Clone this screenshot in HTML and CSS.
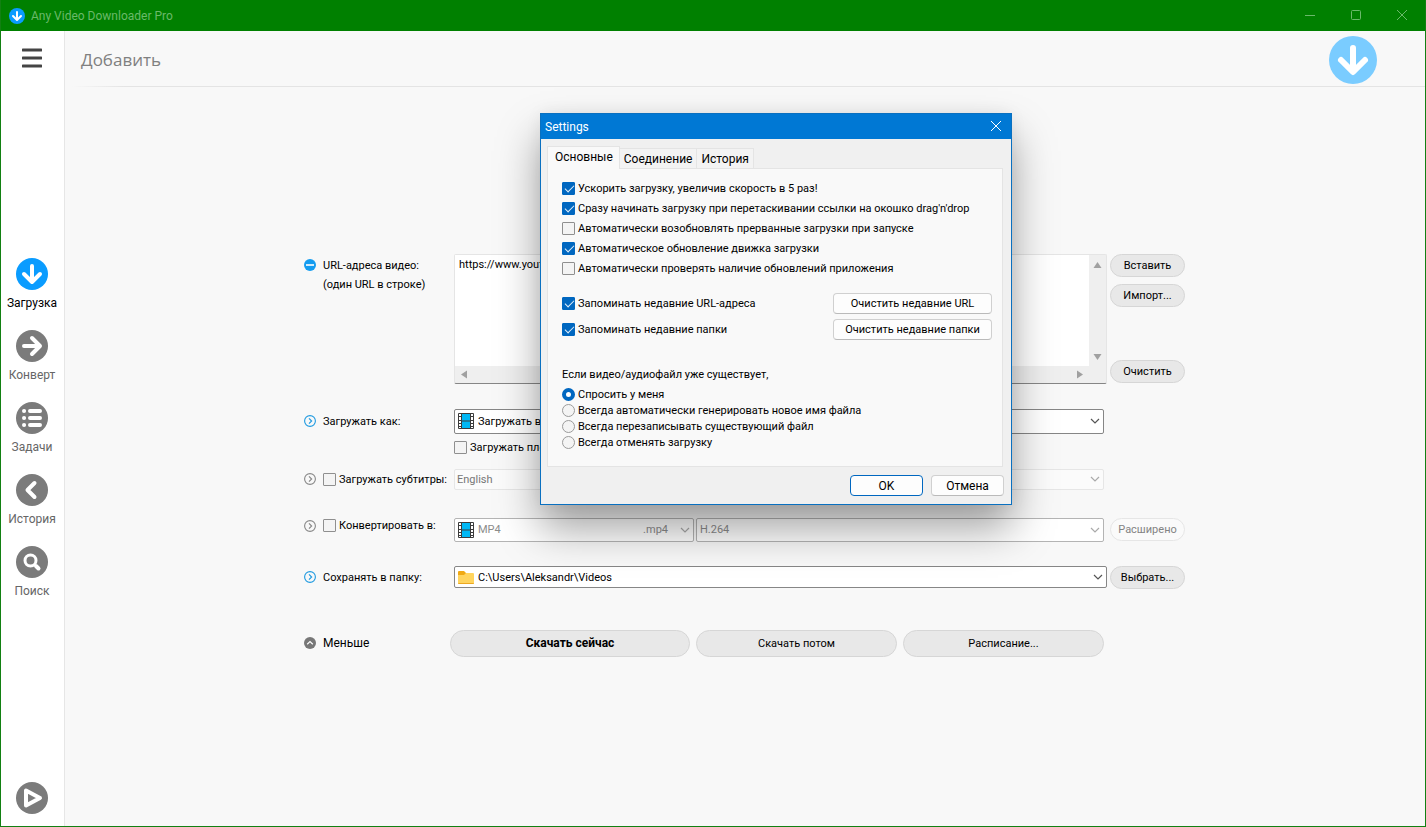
FILE: index.html
```
<!DOCTYPE html>
<html lang="ru">
<head>
    <meta charset="UTF-8">
    <meta name="viewport" content="width=device-width, initial-scale=1.0">
    <title>Any Video Downloader Pro</title>
    <link rel="stylesheet" href="styles.css">
</head>
<body>
    <!-- shared icons -->
    <svg class="sprite" aria-hidden="true">
        <symbol id="arrow-down" viewBox="0 0 32 32">
            <circle cx="16" cy="16" r="16" fill="currentColor"/>
            <path d="M16 8v15M8 16l8 8 8-8" fill="none" stroke="#fff" stroke-width="4" stroke-linecap="round" stroke-linejoin="round"/>
        </symbol>
        <symbol id="chevron" viewBox="0 0 10 6">
            <path d="M1 1l4 4 4-4" fill="none" stroke="currentColor" stroke-width="1.2"/>
        </symbol>
        <symbol id="film" viewBox="0 0 16 16">
            <rect width="16" height="16" rx="1" fill="#3c3c3c"/>
            <path d="M4 1h8v6.500H4zM4 8.500h8V15H4z" fill="#00b7f4"/>
            <path d="M1 1h2v2H1zM1 4h2v3H1zM1 8h2v2H1zM1 11h2v2H1zM1 14h2v1H1zM13 1h2v2h-2zM13 4h2v3h-2zM13 8h2v2h-2zM13 11h2v2h-2zM13 14h2v1h-2z" fill="#fff"/>
        </symbol>
        <symbol id="expand" viewBox="0 0 12 12">
            <circle cx="6" cy="6" r="5.4" fill="none" stroke="currentColor" stroke-width="1.1"/>
            <path d="M5 3.400L7.600 6 5 8.600" fill="none" stroke="currentColor" stroke-width="1.2"/>
        </symbol>
    </svg>

    <div class="app">
        <header class="titlebar">
            <svg class="app-icon"><use href="#arrow-down"/></svg>
            <span class="app-name">Any Video Downloader Pro</span>
            <button class="win-btn" aria-label="Minimize"><svg viewBox="0 0 10 10"><path d="M0 5.5h10"/></svg></button>
            <button class="win-btn" aria-label="Maximize"><svg viewBox="0 0 10 10"><rect x="0.5" y="0.5" width="9" height="9" rx="1"/></svg></button>
            <button class="win-btn" aria-label="Close"><svg viewBox="0 0 10 10"><path d="M0 0l10 10M10 0L0 10"/></svg></button>
        </header>

        <div class="body">
            <aside class="sidebar">
                <button class="menu-btn" aria-label="Меню">
                    <svg viewBox="0 0 20 20"><path d="M1 2h18M1 10h18M1 18h18" stroke="#444" stroke-width="3" stroke-linecap="round"/></svg>
                </button>
                <nav class="nav">
                    <a class="nav-item active" href="#">
                        <svg><use href="#arrow-down"/></svg>
                        <span>Загрузка</span>
                    </a>
                    <a class="nav-item" href="#">
                        <svg viewBox="0 0 32 32"><circle cx="16" cy="16" r="16"/><path class="stroke" d="M8 16h15M16 8l8 8-8 8"/></svg>
                        <span>Конверт</span>
                    </a>
                    <a class="nav-item" href="#">
                        <svg viewBox="0 0 32 32"><circle cx="16" cy="16" r="16"/><path class="stroke" d="M8 9h.1M14 9h10M8 16h.1M14 16h10M8 23h.1M14 23h10"/></svg>
                        <span>Задачи</span>
                    </a>
                    <a class="nav-item" href="#">
                        <svg viewBox="0 0 32 32"><circle cx="16" cy="16" r="16"/><path class="stroke" d="M18.500 9l-7 7 7 7"/></svg>
                        <span>История</span>
                    </a>
                    <a class="nav-item" href="#">
                        <svg viewBox="0 0 32 32"><circle cx="16" cy="16" r="16"/><circle class="stroke lens" cx="14.5" cy="14.5" r="5.5"/><path class="stroke" d="M20 20l2.500 2.500"/></svg>
                        <span>Поиск</span>
                    </a>
                </nav>
                <button class="play-btn" aria-label="Воспроизвести">
                    <svg viewBox="0 0 32 32"><circle cx="16" cy="16" r="16"/><path class="stroke" d="M10 8.500v15l14-7.500z"/></svg>
                </button>
            </aside>

            <main class="main">
                <div class="page-head">
                    <h1>Добавить</h1>
                    <svg class="big-icon"><use href="#arrow-down"/></svg>
                </div>

                <form class="form">
                    <div class="row row-url">
                        <svg class="toggle" viewBox="0 0 12 12"><circle cx="6" cy="6" r="6" fill="#149cf0"/><path d="M2 6h8" stroke="#fff" stroke-width="1.6"/></svg>
                        <label class="label" for="urls">URL-адреса видео:<br>(один URL в строке)</label>
                        <div class="url-box">
                            <textarea id="urls" wrap="off">https://www.youtube.com/</textarea>
                            <div class="vbar">
                                <svg viewBox="0 0 8 6"><path d="M4 0l4 6H0z"/></svg>
                                <svg viewBox="0 0 8 6"><path d="M0 0h8L4 6z"/></svg>
                            </div>
                            <div class="hbar">
                                <svg viewBox="0 0 6 8"><path d="M6 0v8L0 4z"/></svg>
                                <svg viewBox="0 0 6 8"><path d="M0 0l6 4-6 4z"/></svg>
                            </div>
                        </div>
                        <div class="side-buttons">
                            <button type="button" class="pill">Вставить</button>
                            <button type="button" class="pill">Импорт...</button>
                            <button type="button" class="pill last">Очистить</button>
                        </div>
                    </div>

                    <div class="row row-as">
                        <svg class="toggle blue"><use href="#expand"/></svg>
                        <label class="label" for="as">Загружать как:</label>
                        <div class="fields">
                            <div class="combo">
                                <svg class="film"><use href="#film"/></svg>
                                <select id="as"><option>Загружать видео</option></select>
                                <svg class="chevron"><use href="#chevron"/></svg>
                            </div>
                        </div>
                    </div>

                    <div class="row row-list">
                        <label class="check"><input type="checkbox">Загружать плейлист</label>
                    </div>

                    <div class="row row-sub">
                        <svg class="toggle"><use href="#expand"/></svg>
                        <label class="label check"><input type="checkbox">Загружать субтитры:</label>
                        <div class="fields">
                            <div class="combo flat">
                                <select aria-label="Субтитры" disabled><option>English</option></select>
                                <svg class="chevron"><use href="#chevron"/></svg>
                            </div>
                        </div>
                    </div>

                    <div class="row row-conv">
                        <svg class="toggle"><use href="#expand"/></svg>
                        <label class="label check"><input type="checkbox">Конвертировать в:</label>
                        <div class="fields">
                            <div class="combo off format">
                                <svg class="film"><use href="#film"/></svg>
                                <select aria-label="Формат" disabled><option>MP4</option></select>
                                <span class="ext">.mp4</span>
                                <svg class="chevron"><use href="#chevron"/></svg>
                            </div>
                            <div class="combo off">
                                <select aria-label="Кодек" disabled><option>H.264</option></select>
                                <svg class="chevron"><use href="#chevron"/></svg>
                            </div>
                        </div>
                        <button type="button" class="pill" disabled>Расширено</button>
                    </div>

                    <div class="row row-save">
                        <svg class="toggle blue"><use href="#expand"/></svg>
                        <label class="label" for="folder">Сохранять в папку:</label>
                        <div class="fields wide">
                            <div class="combo">
                                <svg class="folder" viewBox="0 0 16 13"><path d="M0 1q0-1 1-1h5l2 2v3H0z" fill="#f0a914"/><path d="M0 4h6l2-2h7q1 0 1 1v9q0 1-1 1H1q-1 0-1-1z" fill="#ffd45e"/><path d="M0 12h16q0 1-1 1H1q-1 0-1-1z" fill="#eda820"/></svg>
                                <select id="folder"><option>C:\Users\Aleksandr\Videos</option></select>
                                <svg class="chevron"><use href="#chevron"/></svg>
                            </div>
                        </div>
                        <button type="button" class="pill">Выбрать...</button>
                    </div>

                    <div class="row row-actions">
                        <svg class="toggle" viewBox="0 0 12 12"><circle cx="6" cy="6" r="6" fill="#777"/><path d="M3.200 7.200L6 4.600l2.800 2.600" fill="none" stroke="#fff" stroke-width="1.2"/></svg>
                        <span class="label less">Меньше</span>
                        <div class="actions">
                            <button type="submit" class="pill primary">Скачать сейчас</button>
                            <button type="button" class="pill">Скачать потом</button>
                            <button type="button" class="pill">Расписание...</button>
                        </div>
                    </div>
                </form>
            </main>
        </div>
    </div>

    <div class="dialog" role="dialog" aria-labelledby="dialog-title">
        <div class="dialog-head">
            <span id="dialog-title">Settings</span>
            <button class="dialog-close" aria-label="Close"><svg viewBox="0 0 10 10"><path d="M0 0l10 10M10 0L0 10" stroke="#fff"/></svg></button>
        </div>
        <div class="dialog-body">
            <div class="tabs" role="tablist">
                <button class="tab selected" role="tab">Основные</button>
                <button class="tab" role="tab">Соединение</button>
                <button class="tab" role="tab">История</button>
            </div>
            <div class="panel">
                <div class="options">
                    <label class="check"><input type="checkbox" checked>Ускорить загрузку, увеличив скорость в 5 раз!</label>
                    <label class="check"><input type="checkbox" checked>Сразу начинать загрузку при перетаскивании ссылки на окошко drag'n'drop</label>
                    <label class="check"><input type="checkbox">Автоматически возобновлять прерванные загрузки при запуске</label>
                    <label class="check"><input type="checkbox" checked>Автоматическое обновление движка загрузки</label>
                    <label class="check"><input type="checkbox">Автоматически проверять наличие обновлений приложения</label>
                </div>
                <div class="recent">
                    <label class="check"><input type="checkbox" checked>Запоминать недавние URL-адреса</label>
                    <button class="btn">Очистить недавние URL</button>
                    <label class="check"><input type="checkbox" checked>Запоминать недавние папки</label>
                    <button class="btn">Очистить недавние папки</button>
                </div>
                <p class="question">Если видео/аудиофайл уже существует,</p>
                <div class="radios">
                    <label class="check"><input type="radio" name="exists" checked>Спросить у меня</label>
                    <label class="check"><input type="radio" name="exists">Всегда автоматически генерировать новое имя файла</label>
                    <label class="check"><input type="radio" name="exists">Всегда перезаписывать существующий файл</label>
                    <label class="check"><input type="radio" name="exists">Всегда отменять загрузку</label>
                </div>
            </div>
            <div class="dialog-foot">
                <button class="btn ok">OK</button>
                <button class="btn">Отмена</button>
            </div>
        </div>
    </div>
</body>
</html>
```
FILE: styles.css
```
* {
    box-sizing: border-box;
}

body {
    margin: 0;
    font-family: Roboto, "Noto Sans", sans-serif;
    font-size: 11px;
    color: #000;
    background: #f8f8f8;
}

button, select, textarea, input {
    font: inherit;
    color: inherit;
    margin: 0;
    padding: 0;
}

button {
    border: none;
    background: none;
}

.sprite {
    display: none;
}

.app {
    min-height: 100vh;
    display: flex;
    flex-direction: column;
    border: 1px solid #128012;
    border-top: none;
}

/* window title */
.titlebar {
    height: 31px;
    display: flex;
    align-items: center;
    background: #008000;
    color: #6ab96a;
    font-size: 12px;
    padding-left: 8px;
}

.app-icon {
    width: 16px;
    height: 16px;
    color: #0a9cff;
    margin-right: 6px;
}

.app-name {
    flex: 1;
}

.win-btn {
    width: 46px;
    height: 30px;
}

.win-btn svg {
    width: 10px;
    height: 10px;
    fill: none;
    stroke: #6ab96a;
}

.body {
    flex: 1;
    display: flex;
}

/* sidebar */
.sidebar {
    width: 64px;
    display: flex;
    flex-direction: column;
    justify-content: space-between;
    align-items: center;
    background: #fff;
    border-right: 1px solid #e6e6e6;
    padding: 17px 1px 12px 0;
}

.menu-btn svg {
    display: block;
    width: 20px;
    height: 20px;
}

.nav {
    display: flex;
    flex-direction: column;
    gap: 20px;
    margin-top: 6px;
}

.nav-item {
    display: flex;
    flex-direction: column;
    align-items: center;
    gap: 5px;
    height: 52px;
    font-size: 12px;
    line-height: 16px;
    color: #666;
    text-decoration: none;
    white-space: nowrap;
}

.nav-item.active {
    color: #000;
}

.nav-item svg, .play-btn svg {
    display: block;
    flex: none;
    width: 32px;
    height: 32px;
    fill: #7b7b7b;
}

.nav-item.active svg {
    color: #0a9cff;
}

.sidebar .stroke {
    fill: none;
    stroke: #fff;
    stroke-width: 4;
    stroke-linecap: round;
    stroke-linejoin: round;
}

.sidebar .lens {
    stroke-width: 3;
}

/* main area */
.main {
    flex: 1;
    display: flex;
    flex-direction: column;
    background: #f8f8f8;
}

.page-head {
    height: 56px;
    display: flex;
    align-items: center;
    justify-content: space-between;
    padding: 2px 48px 0 16px;
    border-bottom: 1px solid;
    border-image: linear-gradient(to right, transparent 8px, #e4e4e4 60px) 1;
}

.page-head h1 {
    margin: 0;
    font-family: "Open Sans", sans-serif;
    font-size: 17px;
    font-weight: 400;
    color: #808080;
}

.big-icon {
    width: 48px;
    height: 48px;
    color: #7accff;
}

.form {
    flex: 1;
    width: 100%;
    max-width: 882px;
    margin: 0 auto;
    display: flex;
    flex-direction: column;
    justify-content: center;
    padding: 0 1px 3px 0;
}

.row {
    display: flex;
    align-items: center;
}

.toggle {
    flex: none;
    width: 12px;
    height: 12px;
    margin-right: 7px;
    color: #888;
}

.toggle.blue {
    color: #1f9ae0;
}

.label {
    flex: none;
    width: 131px;
    white-space: nowrap;
}

.check {
    display: flex;
    align-items: center;
    gap: 3px;
    white-space: nowrap;
    line-height: 13px;
}

.row-url {
    align-items: stretch;
    margin-bottom: 25px;
}

.row-url .toggle {
    margin-top: 5px;
}

.row-url .label {
    line-height: 19px;
    padding-top: 2px;
}

.row-as {
    margin-bottom: 7px;
}

.row-list {
    padding-left: 150px;
    margin-bottom: 15px;
}

.row-sub {
    margin-bottom: 28px;
}

.row-conv {
    margin-bottom: 24px;
}

/* the caption lines up with the upper part of its fields */
.row-conv .toggle, .row-conv .label {
    margin-bottom: 8px;
}

.row-save {
    margin-bottom: 41px;
}

/* url list */
.url-box {
    flex: 1;
    height: 130px;
    display: grid;
    grid-template-columns: 1fr 17px;
    grid-template-rows: 1fr 17px;
    background: #efefef;
    border: 1px solid #e5e5e5;
    border-bottom-color: #868686;
    border-radius: 2px;
}

.url-box textarea {
    border: none;
    outline: none;
    resize: none;
    overflow: hidden;
    background: #fff;
    padding: 3px 4px;
}

.url-box svg {
    fill: #a0a0a0;
}

.vbar {
    display: flex;
    flex-direction: column;
    justify-content: space-between;
    align-items: center;
    padding: 7px 0 6px;
}

.vbar svg {
    width: 9px;
    height: 6px;
}

.hbar {
    display: flex;
    justify-content: space-between;
    align-items: center;
    padding: 0 6px;
}

.hbar svg {
    width: 6px;
    height: 9px;
}

.side-buttons {
    display: flex;
    flex-direction: column;
    gap: 7px;
    padding-bottom: 1px;
}

.pill {
    flex: none;
    width: 75px;
    height: 23px;
    margin-left: 3px;
    background: #e8e8e8;
    border: 1px solid #d6d6d6;
    border-radius: 14px;
    white-space: nowrap;
}

.pill:disabled {
    background: #fafafa;
    border-color: #e6e6e6;
    color: #838383;
}

.pill.last {
    margin-top: auto;
}

/* drop-downs */
.fields {
    flex: 1;
    display: flex;
    gap: 2px;
    margin-right: 3px;
}

.row-as .fields, .row-sub .fields {
    margin-right: 81px;
}

.fields.wide {
    margin-right: 0;
}

.combo {
    flex: 1;
    height: 25px;
    display: flex;
    align-items: center;
    background: #fff;
    border: 1px solid #868686;
    border-radius: 2px;
    padding: 0 3px;
}

.combo select {
    flex: 1;
    height: 100%;
    min-width: 0;
    appearance: none;
    border: none;
    outline: none;
    background: transparent;
    opacity: 1;
}

.row-conv .combo {
    height: 24px;
}

.row-save .combo {
    height: 22px;
}

.combo.format {
    flex: none;
    width: 240px;
}

.combo.off {
    color: #8c8c8c;
    border-color: #b4b4b4;
}

.combo.off .chevron {
    color: #aaa;
}

.combo.flat {
    height: 21px;
    color: #777;
    background: #fbfbfb;
    border-color: #e6e6e6;
    padding-left: 2px;
}

.combo.flat .chevron {
    color: #aaa;
}

.chevron {
    flex: none;
    width: 10px;
    height: 6px;
    color: #555;
}

.ext {
    padding-right: 12px;
}

.film {
    flex: none;
    width: 16px;
    height: 16px;
    margin-right: 4px;
}

.folder {
    flex: none;
    width: 16px;
    height: 13px;
    margin-right: 4px;
}

.less {
    width: 127px;
    font-size: 12px;
}

.actions {
    flex: 1;
    display: grid;
    grid-template-columns: 240fr 201fr 201fr;
    gap: 6px;
    margin-right: 81px;
}

.actions .pill {
    width: auto;
    height: 27px;
    margin: 0;
}

.actions .primary {
    font-size: 12px;
    font-weight: bold;
}

/* check boxes and radio buttons */
input[type="checkbox"], input[type="radio"] {
    appearance: none;
    flex: none;
    width: 13px;
    height: 13px;
    border: 1px solid #8f8f8f;
    border-radius: 1px;
    background: #f4f4f4;
}

input[type="radio"] {
    border-radius: 50%;
    border-color: #9b9b9b;
}

input[type="checkbox"]:checked {
    border-color: #0067c0;
    background: #0067c0;
}

input[type="checkbox"]:checked::after {
    content: "";
    display: block;
    width: 8px;
    height: 4px;
    margin: 2px 0 0 2px;
    border: solid #e4f0fa;
    border-width: 0 0 1px 1px;
    transform: rotate(-45deg);
}

input[type="radio"]:checked {
    border: 4px solid #0067c0;
    background: #fff;
}

/* settings window */
.dialog {
    position: absolute;
    top: 113px;
    left: 540px;
    width: 472px;
    background: #f0f0f0;
    border: 1px solid #0a70c0;
    box-shadow: 0 24px 40px rgba(0, 0, 0, 0.36), 0 0 16px rgba(0, 0, 0, 0.06);
}

.dialog-head {
    height: 25px;
    display: flex;
    align-items: center;
    justify-content: space-between;
    background: #0078d4;
    color: #fff;
    font-size: 12px;
    padding-left: 4px;
}

.dialog-close {
    width: 30px;
    height: 25px;
}

.dialog-close svg {
    width: 10px;
    height: 10px;
}

.dialog-body {
    padding: 7px 7px 8px 6px;
}

.tabs {
    display: flex;
    align-items: flex-end;
}

.tab {
    height: 20px;
    font-size: 12px;
    background: #f3f3f3;
    border: 1px solid #e4e4e4;
    border-width: 1px 1px 0 0;
    padding: 0 4px;
}

.tab.selected {
    height: 23px;
    margin-bottom: -1px;
    padding: 0 6px 2px 7px;
    background: #f9f9f9;
    border-left-width: 1px;
}

.panel {
    background: #f9f9f9;
    border: 1px solid #e4e4e4;
    margin-right: 1px;
    padding: 13px 10px 17px 14px;
}

.options {
    display: flex;
    flex-direction: column;
    gap: 7px;
    margin-bottom: 18px;
}

.recent {
    display: grid;
    grid-template-columns: 1fr 159px;
    row-gap: 5px;
    align-items: center;
    margin-bottom: 26px;
}

.btn {
    height: 21px;
    background: #fdfdfd;
    border: 1px solid #d0d0d0;
    border-bottom-color: #bababa;
    border-radius: 4px;
}

.question {
    margin: 0 0 5px;
    line-height: 17px;
}

.radios {
    display: flex;
    flex-direction: column;
    gap: 3px;
}

.dialog-foot {
    display: flex;
    justify-content: flex-end;
    gap: 8px;
    padding-top: 8px;
}

.dialog-foot .btn {
    width: 73px;
    font-size: 12px;
}

.dialog-foot .ok {
    border-color: #0067c0;
}
```
